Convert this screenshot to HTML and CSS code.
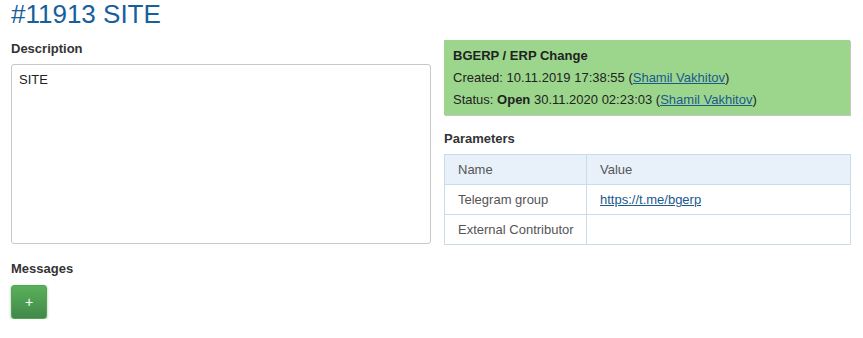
FILE: index.html
```html
<!DOCTYPE html>
<html lang="en">
  <head>
    <meta charset="UTF-8" />
    <title>#11913 SITE</title>
    <link rel="stylesheet" href="styles.css">
  </head>
  <body>
    <h1 class="title">#11913 SITE</h1>

    <div class="columns">
      <!-- Left: description -->
      <div class="col">
        <div class="label">Description</div>
        <div class="description">SITE</div>
      </div>

      <!-- Right: process header and parameters -->
      <div class="col">
        <div class="status-box">
          <div class="status-type">BGERP / ERP Change</div>
          <div>Created: 10.11.2019 17:38:55 (<a href="#">Shamil Vakhitov</a>)</div>
          <div>Status: <b>Open</b> 30.11.2020 02:23:03 (<a href="#">Shamil Vakhitov</a>)</div>
        </div>

        <div class="label label-spaced">Parameters</div>
        <table class="params">
          <colgroup>
            <col class="name-col">
            <col>
          </colgroup>
          <tr>
            <th>Name</th>
            <th>Value</th>
          </tr>
          <tr>
            <td>Telegram group</td>
            <td><a href="#">https://t.me/bgerp</a></td>
          </tr>
          <tr>
            <td>External Contributor</td>
            <td></td>
          </tr>
        </table>
      </div>
    </div>

    <!-- Messages -->
    <div class="label label-spaced">Messages</div>
    <button class="btn-add" type="button">+</button>
  </body>
</html>
```

FILE: styles.css
```css
/* Page base */
body {
  margin: 0;
  padding: 0 11px;
  font-family: "Liberation Sans", Arial, sans-serif;
  font-size: 13px;
  color: #222;
  background: #fff;
}

a {
  color: #1a5a8c;
}

/* Process title */
.title {
  margin: 0 0 11px 0;
  font-size: 26px;
  line-height: 29px;
  font-weight: normal;
  color: #17609a;
}

/* Two column layout */
.columns {
  display: grid;
  grid-template-columns: 420px 407px;
  column-gap: 13px;
}

/* Section labels */
.label {
  font-weight: bold;
  line-height: 18px;
  color: #333;
  margin-bottom: 6px;
}

.label-spaced {
  margin-top: 15px;
}

/* Description box */
.description {
  height: 164px;
  border: 1px solid #c8c8c8;
  border-radius: 3px;
  padding: 7px 7px;
  line-height: 15px;
}

/* Green status header */
.status-box {
  background: #9cd68c;
  padding: 5px 9px 4px 9px;
  line-height: 22px;
  box-shadow: 1px 1px 0 #c4c4c4;
  margin-right: 1px;
}

.status-type {
  font-weight: bold;
}

/* Parameters table */
.params {
  width: 100%;
  table-layout: fixed;
  border-collapse: collapse;
  color: #555;
}

.params .name-col {
  width: 142px;
}

.params th,
.params td {
  height: 29px;
  padding: 0 0 0 13px;
  border: 1px solid #c9dce9;
  text-align: left;
  font-weight: normal;
  white-space: nowrap;
}

.params th {
  background: #e8f1f9;
}

/* Add message button */
.btn-add {
  margin-top: 1px;
  width: 36px;
  height: 34px;
  border: 1px solid #4fa64f;
  border-radius: 3px;
  background: linear-gradient(#5ab05a, #41894a);
  color: #fff;
  font-size: 14px;
  box-shadow: 0 1px 3px rgba(0, 0, 0, 0.3);
  cursor: pointer;
}
```
